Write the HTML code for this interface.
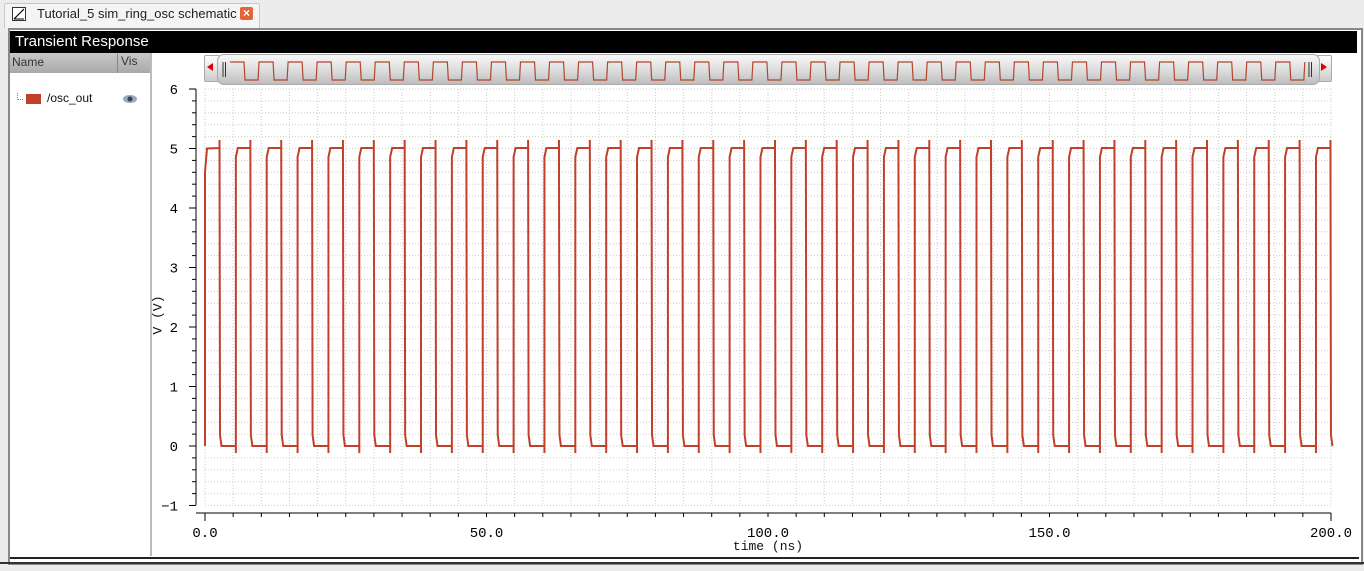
<!DOCTYPE html>
<html><head><style>
body{margin:0;width:1364px;height:571px;background:#ececec;position:relative;overflow:hidden;font-family:"Liberation Sans",sans-serif;}
.abs{position:absolute}
</style></head><body>
<div class="abs" style="left:4px;top:3px;width:254px;height:24px;background:#f4f4f4;border:1px solid #c8c8c8;border-bottom:none;border-radius:3px 3px 0 0"></div>
<div class="abs" style="left:12px;top:7px;width:12px;height:12px;border:1px solid #333;background:#fff"></div>
<svg class="abs" style="left:12px;top:7px" width="14" height="14"><line x1="2" y1="12" x2="12" y2="2" stroke="#000" stroke-width="1.2"/><line x1="2" y1="12" x2="12" y2="12" stroke="#000"/></svg>
<div class="abs" style="left:37px;top:6px;font-size:13px;color:#222">Tutorial_5 sim_ring_osc schematic</div>
<div class="abs" style="left:240px;top:7px;width:13px;height:13px;background:#e0653a;border-radius:2px;color:#fff;font-size:12px;line-height:13px;text-align:center;font-weight:bold">×</div>
<div class="abs" style="left:8px;top:28px;width:1351px;height:533px;border:2px solid #888;background:#fff"></div>
<div class="abs" style="left:10px;top:31px;width:1347px;height:22px;background:#000;color:#fff;font-size:15px;line-height:22px;padding-left:5px;box-sizing:border-box">Transient Response</div>
<div class="abs" style="left:10px;top:53px;width:140px;height:20px;background:linear-gradient(#c8c8c8,#a9a9a9);font-size:12px;color:#333;line-height:18px"><span style="padding-left:2px">Name</span></div>
<div class="abs" style="left:117px;top:53px;width:1px;height:20px;background:#888"></div>
<div class="abs" style="left:121px;top:54px;font-size:12px;color:#333">Vis</div>
<div class="abs" style="left:150px;top:53px;width:2px;height:503px;background:#bbb"></div>
<div class="abs" style="left:17px;top:93px;width:5px;height:6px;border-left:1px dotted #888;border-bottom:1px dotted #888"></div>
<div class="abs" style="left:26px;top:94px;width:15px;height:10px;background:#c0402a"></div>
<div class="abs" style="left:47px;top:91px;font-size:12px;color:#111">/osc_out</div>
<svg class="abs" style="left:122px;top:93px" width="16" height="12"><ellipse cx="8" cy="6" rx="7" ry="4" fill="#9ab"/><circle cx="8" cy="6" r="2.5" fill="#345"/></svg>
<div class="abs" style="left:10px;top:557px;width:1349px;height:2px;background:#222"></div>
<div class="abs" style="left:0px;top:562px;width:1364px;height:2px;background:#333"></div>
<div class="abs" style="left:204px;top:55px;width:14px;height:25px;background:linear-gradient(#fff,#ccc);border:1px solid #aaa;border-radius:2px"></div>
<div class="abs" style="left:207px;top:63px;width:0;height:0;border-top:4px solid transparent;border-bottom:4px solid transparent;border-right:6px solid #d00"></div>
<div class="abs" style="left:1316px;top:55px;width:14px;height:25px;background:linear-gradient(#fff,#ccc);border:1px solid #aaa;border-radius:2px"></div>
<div class="abs" style="left:1321px;top:63px;width:0;height:0;border-top:4px solid transparent;border-bottom:4px solid transparent;border-left:6px solid #d00"></div>
<div class="abs" style="left:217px;top:54px;width:1101px;height:29px;background:linear-gradient(#f8f8f8,#d8d8d8 60%,#bdbdbd);border:1px solid #aaa;border-radius:7px"></div>
<svg class="abs" style="left:0;top:0" width="1364" height="571" id="s"></svg>
<div class="abs" style="left:158px;top:315px;transform:translate(-50%,-50%) rotate(-90deg);font-family:'Liberation Mono',monospace;font-size:13px;color:#111;white-space:nowrap">V (V)</div>
<div class="abs" style="left:768px;top:539px;transform:translateX(-50%);font-family:'Liberation Mono',monospace;font-size:13px;color:#111">time (ns)</div>
<script>
var s=document.getElementById('s'),h='';
function vy(v){return 446-v*59.5}
for(var i=0;i<=40;i++){var x=205+i*28.15;h+='<line x1="'+x+'" y1="89" x2="'+x+'" y2="505" stroke="#ccc" stroke-dasharray="1,2"/>';}
for(var v=-1;v<=6.001;v+=0.2){var y=vy(v);h+='<line x1="205" y1="'+y+'" x2="1331" y2="'+y+'" stroke="#ccc" stroke-dasharray="1,2"/>';}
h+='<line x1="196" y1="89" x2="196" y2="505" stroke="#000"/>';
for(var k=-5;k<=30;k++){var y=vy(k/5);var maj=k%5==0;h+='<line x1="'+(maj?189:192)+'" y1="'+y+'" x2="196" y2="'+y+'" stroke="#000"/>';}
var labs=['6','5','4','3','2','1','0','−1'];
for(var j=0;j<8;j++){h+='<text x="178" y="'+(vy(6-j)+5)+'" text-anchor="end" font-family="Liberation Mono,monospace" font-size="14">'+labs[j]+'</text>';}
h+='<line x1="196" y1="513" x2="1331" y2="513" stroke="#000"/>';
for(var i=0;i<=40;i++){var x=205+i*28.15;var e=(i==0||i==40);h+='<line x1="'+x+'" y1="513" x2="'+x+'" y2="'+(e?521:517)+'" stroke="#000"/>';}
var xl=['0.0','50.0','100.0','150.0','200.0'];
for(var j=0;j<5;j++){h+='<text x="'+(205+j*281.5)+'" y="537" text-anchor="middle" font-family="Liberation Mono,monospace" font-size="14">'+xl[j]+'</text>';}
var P=30.86,d='M205 446 L205 '+vy(4.6)+' L207 '+vy(5);
for(var n=0;n<37;n++){var x0=205+n*P;if(n>0){d+=' L'+x0+' 446 L'+x0+' 453 L'+x0+' 157 L'+(x0+2)+' 148';}
var xf=x0+14.5;if(xf>1331){d+=' L1331 148';break;}
d+=' L'+xf+' 148 L'+xf+' 140 L'+(xf+0.5)+' 435 L'+(xf+2)+' 446';}
h+='<path d="'+d+'" fill="none" stroke="#c0402a" stroke-width="2"/>';
var d2='M230 62',Q=29.05;
for(var n=0;n<37;n++){var a=230+n*Q;var b=a+14;if(a+Q>1306){d2+=' L1306 62';break;}d2+=' L'+b+' 62 L'+(b+1)+' 80 L'+(a+Q-1)+' 80 L'+(a+Q)+' 62';}
h+='<path d="'+d2+'" fill="none" stroke="#b5452c" stroke-width="1.2"/>';
h+='<line x1="223" y1="62" x2="223" y2="77" stroke="#333"/><line x1="225.5" y1="62" x2="225.5" y2="77" stroke="#333"/>';
h+='<line x1="1309" y1="62" x2="1309" y2="77" stroke="#333"/><line x1="1311.5" y1="62" x2="1311.5" y2="77" stroke="#333"/>';
s.innerHTML=h;
</script>
</body></html>
